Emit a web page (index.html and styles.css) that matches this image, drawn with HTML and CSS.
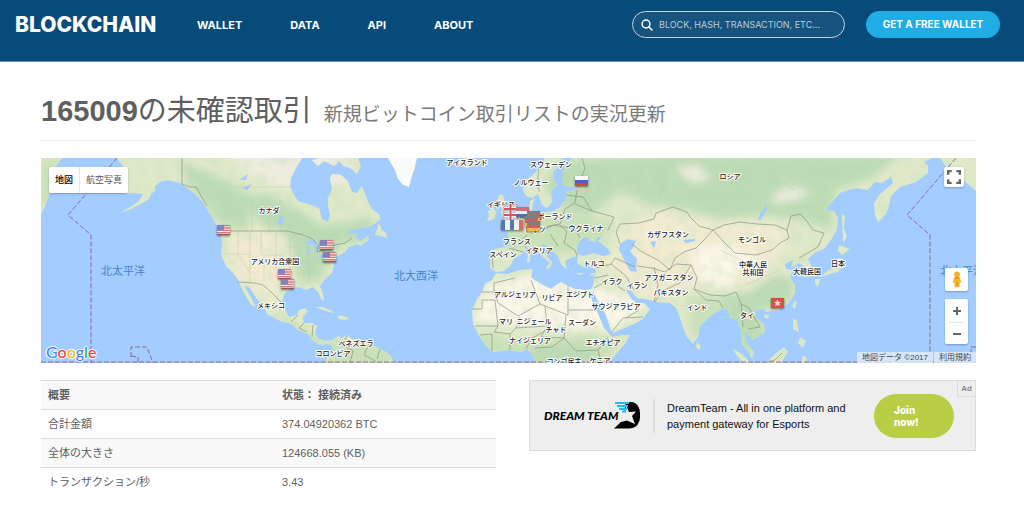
FILE: index.html
```html
<!DOCTYPE html>
<html lang="ja">
<head>
<meta charset="utf-8">
<meta name="viewport" content="width=device-width, initial-scale=1">
<title>未確認取引 - Blockchain</title>
<link rel="stylesheet" href="styles.css">
</head>
<body>
<header class="topbar">
  <a class="brand" href="#">BLOCKCHAIN</a>
  <nav class="nav">
    <a href="#">WALLET</a>
    <a href="#">DATA</a>
    <a href="#">API</a>
    <a href="#">ABOUT</a>
  </nav>
  <form class="search">
    <svg class="search-icon" viewBox="0 0 12 12" aria-hidden="true"><circle cx="5" cy="5" r="3.9"/><path d="M8 8l3 3"/></svg>
    <input type="search" aria-label="Search" placeholder="BLOCK, HASH, TRANSACTION, ETC...">
  </form>
  <a class="wallet-btn" href="#">GET A FREE WALLET</a>
</header>

<main class="page">
  <h1 class="title"><b>165009</b>の未確認取引 <small>新規ビットコイン取引リストの実況更新</small></h1>

  <section class="map" aria-label="地図">
    <svg class="map-canvas" viewBox="41 158 935 205" preserveAspectRatio="xMidYMid slice" role="img" aria-label="世界地図">
      <defs>
        <filter id="soft" x="-20%" y="-20%" width="140%" height="140%"><feGaussianBlur stdDeviation="4"/></filter>
        <filter id="relief" x="0" y="0" width="100%" height="100%">
          <feTurbulence type="fractalNoise" baseFrequency="0.09" numOctaves="4" seed="4"/>
          <feColorMatrix values="0 0 0 0 .55  0 0 0 0 .75  0 0 0 0 .52  2.6 0 0 0 -1.15"/>
        </filter>
        <clipPath id="land">
          <path d="M41 158H62L56 166L48 172L52 181L50 192L46 204L41 215Z"/>
          <path d="M109 158L117 158L124 168L128 185L125 194L134 193L143 194L139 201L130 207L120 213L131 209L143 203L149 199L151 194L155 191L155 186L160 182L168 180L180 183L190 190L198 197L203 202L207 209L212 217L217 226L221 235L222 244L221 255L226 266L232 272L237 278L241 287L247 298L251 305L256 307L252 299L246 289L245 285L250 288L255 296L260 303L265 309L267 314L280 321L292 324L298 330L308 334L312 340L320 345L327 344L332 345L333 350L328 357L323 363H394L390 355L383 350L373 345L360 340L352 339L347 335L342 338L338 336L333 340L325 341L319 339L315 334L317 326L312 323L304 323L303 317L308 311L305 308L299 310L297 315L289 317L285 310L282 302L284 294L290 289L299 287L306 290L313 287L318 292L321 299L324 301L323 294L320 286L325 279L332 273L334 265L334 258L340 255L345 252L349 247L358 244L360 246L369 240L368 236L360 241L355 237L358 233L350 233L344 239L350 230L360 228L371 226L380 220L380 215L372 209L369 204L366 196L362 186L357 193L352 192L348 181L341 175L332 174L330 178L332 189L328 198L328 206L330 215L328 222L322 219L319 208L308 204L298 201L293 193L290 186L291 178L296 168L302 158Z"/>
          <path d="M312 160L320 158H358L361 166L357 174L350 168L344 166L339 161L334 166L324 161L318 166Z"/>
          <path d="M375 235L379 223L382 230L386 233L387 238L381 236Z"/>
          <path d="M388 158H417L415 168L412 176L409 187L403 185L398 179L395 170Z"/>
          <path d="M458 160L465 158L479 160L478 165L467 168L460 166Z"/>
          <path d="M498 196L503 194L504 200L507 205L509 211L514 216L512 221L499 223L504 218L501 213L502 208L498 204Z M488 211L494 208L496 213L494 219L487 221L489 216Z"/>
          <path d="M545 158H563L560 165L553 172L554 181L558 185L551 191L552 202L547 208L542 205L538 194L532 198L526 196L523 190L524 181L532 176L540 167Z"/>
          <path d="M572 158L567 166L562 173L562 181L565 187L574 187L578 189L566 192L567 198L561 206L554 211L546 212L537 214L532 210L533 203L535 198L530 201L529 213L521 214L515 221L509 224L502 226L508 232L509 246L500 248L491 250L490 268L496 272L504 271L510 266L514 259L523 253L526 248L533 247L538 251L543 257L550 263L545 269L550 268L552 262L547 256L541 249L543 243L550 249L558 256L561 264L567 270L565 261L572 257L578 256L577 263L583 267L590 266L596 270L594 281L592 289L586 290L575 289L568 286L561 282L555 286L551 289L543 285L536 281L531 277L533 269L520 270L507 274L496 273L492 280L485 284L482 292L477 299L472 310L473 324L480 337L486 346L493 352L508 350L521 352L527 349L532 354L535 363H609L616 354L625 344L630 335L623 335L612 337L604 328L598 314L591 298L593 291L599 303L606 315L612 333L622 329L636 323L643 319L650 309L644 303L636 303L630 297L626 289L631 291L637 298L646 299L657 302L670 303L676 308L679 315L683 327L687 337L693 344L698 337L700 326L707 319L713 314L722 309L727 308L730 318L737 320L741 331L742 344L750 354L752 359L754 352L747 344L745 332L753 340L759 336L765 332L764 324L756 318L756 310L764 309L766 312L778 310L789 303L795 293L795 285L790 277L793 270L786 269L785 264L793 260L791 268L799 263L806 268L804 277L812 276L813 269L808 259L816 252L824 249L831 240L837 230L838 218L834 211L825 210L832 202L840 193L855 188L868 190L875 182L882 183L891 177L893 183L886 189L880 194L874 203L875 215L878 222L886 214L890 203L891 196L900 187L916 182L928 173L928 166L924 162L932 158Z"/>
          <path d="M940 158H976V191L970 186L961 178L952 174L945 165Z"/>
          <path d="M842 214L845 216L844 228L847 237L843 243Z M839 245L850 249L842 255L838 251Z M839 257L843 266L838 272L830 274L821 277L827 271L834 267Z M815 279L820 279L818 287L815 284Z M797 301L795 309L792 306L794 302Z M765 314L770 316L767 319L764 317Z M793 319L797 320L799 332L793 329Z M800 337L806 341L803 348L798 343Z M733 349L742 354L751 363H744L737 356Z M766 363L775 354L784 347L788 352L781 363Z M697 342L701 347L699 350L696 347Z M315 307L323 307L336 313L329 312Z M339 315L350 318L345 320L338 319Z M528 254L530 254L530 262L527 262Z M576 273L584 273L580 275Z M590 274L596 273L592 276Z M801 363L803 355L807 358L806 363Z"/>
        </clipPath>
        <symbol id="us" viewBox="0 0 13 10"><path fill="#f7e9e9" d="M0 0h13v10H0z"/><path stroke="#d9737b" stroke-width="1.4" d="M0 .6h13M0 3h13M0 5.4h13M0 7.8h13"/><path fill="#a3454b" d="M0 9h13v1H0z"/><path fill="#767dc0" d="M0 0h7v5.5H0z"/></symbol>
        <symbol id="gb" viewBox="0 0 13 10"><path fill="#8d97c6" d="M0 0h13v10H0z"/><path stroke="#f6eef2" stroke-width="2.4" d="M0 0l13 10M13 0L0 10"/><path stroke="#e08d96" d="M0 0l13 10M13 0L0 10"/><path stroke="#fff" stroke-width="4" d="M6.500 0v10M0 5h13"/><path stroke="#d54652" stroke-width="2" d="M6.500 0v10M0 5h13"/></symbol>
        <symbol id="nl" viewBox="0 0 13 10"><path fill="#cd6870" d="M0 0h13v4H0z"/><path fill="#eee" d="M0 4h13v3H0z"/><path fill="#4a62a8" d="M0 7h13v3H0z"/></symbol>
        <symbol id="de" viewBox="0 0 13 10"><path fill="#7a7676" d="M0 0h13v4H0z"/><path fill="#d9504f" d="M0 4h13v3H0z"/><path fill="#edb93d" d="M0 7h13v3H0z"/></symbol>
        <symbol id="fr" viewBox="0 0 13 10"><path fill="#4a74ad" d="M0 0h4v10H0z"/><path fill="#f4f4f4" d="M4 0h5v10H4z"/><path fill="#dc625f" d="M9 0h4v10H9z"/></symbol>
        <symbol id="ru" viewBox="0 0 13 10"><path fill="#fff" d="M0 0h13v4H0z"/><path fill="#3a55c8" d="M0 4h13v3H0z"/><path fill="#cf3b36" d="M0 7h13v3H0z"/></symbol>
        <symbol id="hk" viewBox="0 0 13 10"><path fill="#d9443b" d="M0 0h13v10H0z"/><path fill="#fbd9d4" d="M6.500 1.500l1 2.300 2.500.1-1.800 1.700.7 2.700-2.400-1.400-2.400 1.400.7-2.700L3 3.900l2.500-.1z"/></symbol>
      </defs>

      <rect class="sea" x="-400" y="158" width="1900" height="205"/>
      <g clip-path="url(#land)">
        <rect class="ground" x="41" y="158" width="935" height="205"/>
        <g filter="url(#soft)">
          <path class="pale" d="M230 150H345L350 182L290 190L270 182L245 172Z"/>
          <path class="forest" d="M178 160L200 170L225 180L250 195L270 195L295 208L320 225L350 222L372 218L375 238L340 245L325 270L318 282L300 280L290 240L262 225L250 210L246 240L235 226L220 224L205 205L190 185Z"/>
          <path class="sand" d="M225 240L245 230L282 232L285 262L275 285L282 300L270 305L235 275Z"/>
          <path class="wood" d="M220 230L226 230L226 255L221 258Z M265 306L285 318L320 340L385 345L400 370H320L290 330Z M41 158H62L52 205H41Z"/>
          <path class="forest" d="M545 185L560 160L680 155L900 155L870 178L835 190L830 230L805 220L760 215L720 220L690 210L650 205L620 190L590 215L560 208Z"/>
          <path class="wood" d="M505 215L570 212L615 225L600 245L560 255L500 250Z"/>
          <path class="sand" d="M620 230L660 210L700 220L740 222L790 225L782 250L770 270L750 288L700 285L650 300L600 262L620 250Z"/>
          <path class="desert" d="M485 286L530 275L600 288L650 305L612 330L570 330L475 322Z"/>
          <path class="desert" d="M690 252L720 242L760 258L738 270L730 290L700 280Z"/>
          <path class="wood" d="M475 334L500 337L535 342L585 334L620 340L600 370H470Z M685 296L720 298L722 315L695 340Z"/>
          <path class="forest" d="M720 295L750 292L775 275L795 280L790 305L760 310L765 340L745 355L725 315Z M530 348L590 343L600 370H530Z"/>
          <path class="pale" d="M675 166H700L712 180L690 182Z M770 197L790 186L812 192L800 199L775 204Z"/>
        </g>
        <rect class="noise" filter="url(#relief)" x="41" y="158" width="935" height="205"/>
        <path fill="#fafafa" d="M388 158H417L412 176L409 187L403 185L398 179Z"/>
      </g>

      <path class="water" d="M577 249L579 242L584 238L588 237L589 241L595 242L597 238L602 236L598 241L608 249L611 254L603 256L594 253L584 256L577 254Z M620 244L628 239L636 241L633 248L630 251L637 259L636 267L637 272L630 271L626 264L622 255L619 250Z M683 240L695 239L695 241L686 243Z M758 218L766 204L767 209L760 221Z M305 243L311 239L318 242L315 244L309 245Z M307 247L309 244L310 255L307 255Z M313 244L320 247L316 252Z M317 257L325 253L323 257Z M277 222L282 214L284 222L280 226Z M239 180L248 174L246 180Z M242 188L252 184L247 190Z M650 242L656 241L654 248Z M578 183L584 180L583 186Z"/>

      <g class="borders">
        <path d="M182 158V184L190 187L196 187L207 206 M229 231H287L300 234L311 238L318 245L317 252L324 250L335 245L345 243L352 238 M237 282L255 283L263 285L271 292L281 302"/>
        <path d="M298 315L291 322M304 323L299 328L307 332M313 325L312 337M347 336L342 345L353 351L350 363M369 344L364 355L376 361M380 349L377 359"/>
        <path d="M540 163L538 176L539 192M582 158L585 168L578 187M577 190L575 203L565 209L560 224L545 227M566 195L583 197L592 211L614 217L608 230M575 204L592 211M537 214L540 224L530 231L522 240L526 248M509 248L523 252M492 252L493 268M540 232L553 225L575 229L580 238M550 234L558 246M560 225L567 232L564 243L575 250L577 256M530 220L520 217"/>
        <path d="M620 244L616 232L620 224L638 223L654 219L656 213L673 207L687 212L690 217L699 226L713 230L705 239L696 248L684 252L675 258L670 270L658 260L642 252L632 244 M713 230L724 225L740 222L757 224L775 225L787 230L789 238L780 243L772 250L756 255L735 253L722 240L713 230 M787 230L791 216L800 214L806 220L813 230L824 233L818 247L799 258"/>
        <path d="M637 266L652 268L665 272L676 264L691 265L697 278L694 289L710 295L725 296L736 292L741 304L749 308M655 302L662 291L680 283L691 265M654 267L658 285L654 302M694 289L706 300L719 301L723 308M741 304L743 327M749 308L757 322L760 327L748 329"/>
        <path d="M482 292H494V283L515 278M494 290L498 303L518 316L540 304L531 280M472 309H482V300L495 300L498 326H475M540 304L568 315V286M569 310H595M520 317L516 328L547 326L545 306M547 326L541 337L564 338L566 315M498 326L494 332L510 334L516 328M480 335L492 334L492 351M510 334V350M526 349L532 338L547 330M564 338L576 351L598 350L608 337M564 338L552 347L535 348M598 350L601 363M596 268L611 264L626 276L634 290M594 288L609 280L625 291M595 278L608 275M611 333L623 318L643 317M626 318L639 310M611 264L615 258L635 267"/>
        <path d="M767 362L775 360L782 353"/>
      </g>
      <g class="states"><path d="M229 187H295M222 254H250M250 231V282M238 231V254L251 274M261 231V255H284M264 256V281M276 232V270M290 238V278M298 246V276M309 257V284M286 262H330M286 247H303M252 203V230M269 198V231M280 200V231M630 175L640 190M655 170L665 180L660 200M700 190L725 205M770 175L795 190M720 250L745 262M745 285L780 270M755 295L775 280M680 305L703 310"/></g>

      <g class="dateline">
        <path d="M117 158L68 215L91 235V363M956 158L907 215L930 235V363M976 347H971V363M131 357V347H147L153 363M131 356L138 357V363"/>
        <path d="M41 362H976"/>
      </g>

      <g class="ocean-label"><text x="101" y="275">北太平洋</text><text x="394" y="280">北大西洋</text><text x="940" y="275">北太平洋</text></g>
      <g class="place">
        <text x="467" y="165">アイスランド</text><text x="551" y="167">スウェーデン</text><text x="531" y="185">ノルウェー</text><text x="730" y="179">ロシア</text>
        <text x="269" y="213">カナダ</text><text x="275" y="264">アメリカ合衆国</text><text x="271" y="308">メキシコ</text><text x="356" y="346">ベネズエラ</text><text x="333" y="356">コロンビア</text>
        <text x="501" y="207">イギリス</text><text x="555" y="219">ポーランド</text><text x="535" y="232">ドイツ</text><text x="586" y="231">ウクライナ</text><text x="517" y="244">フランス</text><text x="539" y="253">イタリア</text><text x="503" y="257">スペイン</text>
        <text x="594" y="266">トルコ</text><text x="612" y="284">イラク</text><text x="637" y="288">イラン</text><text x="669" y="280">アフガニスタン</text><text x="671" y="295">パキスタン</text><text x="616" y="309">サウジアラビア</text>
        <text x="515" y="297">アルジェリア</text><text x="552" y="300">リビア</text><text x="580" y="297">エジプト</text><text x="506" y="324">マリ</text><text x="534" y="324">ニジェール</text><text x="556" y="332">チャド</text><text x="582" y="325">スーダン</text><text x="530" y="343">ナイジェリア</text><text x="603" y="345">エチオピア</text><text x="564" y="364">コンゴ民主</text><text x="600" y="363">ケニア</text>
        <text x="668" y="237">カザフスタン</text><text x="752" y="242">モンゴル</text><text x="753" y="267">中華人民</text><text x="753" y="275">共和国</text><text x="697" y="310">インド</text><text x="747" y="318">タイ</text><text x="807" y="274">大韓民国</text><text x="838" y="266">日本</text>
      </g>

      <g class="flags">
        <use href="#us" x="217" y="225" width="13" height="10"/><use href="#us" x="320" y="240" width="13" height="10"/><use href="#us" x="323" y="252" width="13" height="10"/><use href="#us" x="278" y="269" width="13" height="10"/><use href="#us" x="281" y="279" width="13" height="10"/>
        <use href="#gb" x="504" y="204" width="13" height="10"/><use href="#gb" x="504" y="210" width="13" height="10"/><use href="#nl" x="516" y="207" width="13" height="10"/><use href="#de" x="527" y="211" width="13" height="10"/><use href="#de" x="525" y="216" width="13" height="10"/><use href="#fr" x="501" y="220" width="13" height="10"/><use href="#fr" x="510" y="220" width="13" height="10"/><use href="#de" x="527" y="221" width="13" height="10"/><use href="#ru" x="575" y="176" width="13" height="10"/><use href="#hk" x="771" y="298" width="13" height="10"/>
      </g>
    </svg>

    <div class="map-types">
      <button type="button" class="active">地図</button>
      <button type="button">航空写真</button>
    </div>
    <button type="button" class="map-btn fullscreen" aria-label="全画面表示"><svg viewBox="0 0 12 12"><path d="M1 4V1h3M8 1h3v3M11 8v3H8M4 11H1V8"/></svg></button>
    <div class="map-side">
      <button type="button" class="map-btn pegman" aria-label="ストリートビュー"><svg viewBox="0 0 10 17"><ellipse cx="5" cy="15.500" rx="3.500" ry="1" fill="#ddd"/><circle cx="5" cy="3.300" r="2.900"/><path d="M2 6.500h6l1.300 5-1.500.2-.5 4H2.700l-.5-4-1.500-.2z"/><path fill="#d58b16" d="M2.500 6h5L6 7.500H4zM4.600 11h.8v4.500h-.8z"/></svg></button>
      <div class="zoom">
        <button type="button" aria-label="ズームイン"><svg viewBox="0 0 10 10"><path d="M1 5h8M5 1v8"/></svg></button>
        <button type="button" aria-label="ズームアウト"><svg viewBox="0 0 10 10"><path d="M1 5h8"/></svg></button>
      </div>
    </div>
    <a class="google" href="#" aria-label="Google"><span class="g-blue">G</span><span class="g-red">o</span><span class="g-yellow">o</span><span class="g-blue">g</span><span class="g-green">l</span><span class="g-red">e</span></a>
    <div class="credits"><span>地図データ ©2017</span><a href="#">利用規約</a></div>
  </section>

  <div class="columns">
    <table class="summary">
      <thead><tr><th scope="col">概要</th><th scope="col">状態： 接続済み</th></tr></thead>
      <tbody>
        <tr><td>合計金額</td><td>374.04920362 BTC</td></tr>
        <tr><td>全体の大きさ</td><td>124668.055 (KB)</td></tr>
        <tr><td>トランザクション/秒</td><td>3.43</td></tr>
      </tbody>
    </table>
    <aside class="ad">
      <div class="ad-logo"><span>DREAM TEAM</span>
        <svg viewBox="0 0 26 27" aria-hidden="true"><path d="M12 0H18C23 1 26 5 26 12V16C25 23 21 26.500 15 26.500H0L8 19L10 10Z"/><path class="star" d="M12.500 4L15 10L22 9.500L18 14L21 22L13 18.500L7 20L8.500 15L3 12L10 10Z"/><path class="beam" d="M1 1h14M3 4h11M5 7h8M8 9.500h4"/></svg>
      </div>
      <p>DreamTeam - All in one platform and payment gateway for Esports</p>
      <a class="join" href="#">Join now!</a>
      <span class="ad-tag">Ad</span>
    </aside>
  </div>
</main>
</body>
</html>
```

FILE: styles.css
```css
* { box-sizing: border-box; }
body {
  margin: 0;
  background: #fff;
  color: #5f5f5f;
  font: 11px/17px "Liberation Sans", "Noto Sans CJK JP", sans-serif;
}
a { color: inherit; text-decoration: none; }
button { margin: 0; padding: 0; border: 0; background: #fff; font: inherit; cursor: pointer; }

.topbar {
  display: flex;
  align-items: flex-start;
  height: 62px;
  padding: 11px 24px 0 15px;
  border-bottom: 1px solid #6b93b2;
  background: #074b7b;
  color: #fff;
  font: 700 11px/28px Inter, sans-serif;
}
.brand { width: 182px; font-size: 21px; font-weight: 800; }
.nav { display: flex; flex: 1; gap: 48px; }
.search {
  display: flex;
  align-items: center;
  gap: 6px;
  width: 213px;
  height: 27px;
  margin-right: 21px;
  padding: 0 8px;
  border: 1px solid #c2d3df;
  border-radius: 14px;
  background: #16547f;
}
.search-icon { flex: none; width: 12px; height: 12px; fill: none; stroke: #fff; stroke-width: 1.5; stroke-linecap: round; }
.search input { flex: 1; min-width: 0; padding: 0; border: 0; outline: 0; background: none; color: #fff; font: 9px/16px Inter, sans-serif; }
.search input::placeholder { color: #b9ccda; opacity: 1; }
.wallet-btn { width: 134px; border-radius: 14px; background: #20ace4; font-size: 10px; line-height: 27px; text-align: center; white-space: nowrap; }

.page { padding: 28px 48px 16px 41px; }
.title {
  margin: 0 0 17px;
  padding-bottom: 8px;
  border-bottom: 1px solid #eee;
  font-size: 29px;
  line-height: 42px;
  font-weight: 400;
}
.title b { font-weight: 700; }
.title small { margin-left: 4px; color: #7b7b7b; font-size: 19px; line-height: 1; }

.map { position: relative; height: 205px; overflow: hidden; background: #a3ccff; }
.map-canvas { display: block; width: 100%; height: 100%; }
.sea, .water { fill: #a3ccff; }
.ground { fill: #dfe9c8; }
.forest { fill: #bcdbb4; }
.wood { fill: #cae1b8; }
.sand { fill: #f2ebd0; }
.desert { fill: #faf6e8; }
.pale { fill: #eeecdf; }
.noise { opacity: .35; }
.borders { fill: none; stroke: #8e9487; stroke-width: .7; }
.states { fill: none; stroke: #c3c6b6; stroke-width: .5; }
.dateline { fill: none; stroke: #94698f; stroke-width: 1; stroke-dasharray: 5 2; }
.ocean-label { fill: #4a83c8; font-size: 11px; }
.place {
  fill: #222;
  stroke: #fff;
  stroke-width: 2px;
  stroke-linejoin: round;
  paint-order: stroke;
  font-size: 7px;
  font-weight: 500;
  font-family: "Noto Sans CJK JP", sans-serif;
  text-anchor: middle;
}
.flags { filter: drop-shadow(0 1px 1px #0008); opacity: .92; }

.map-types {
  position: absolute;
  top: 9px;
  left: 8px;
  display: flex;
  border-radius: 2px;
  overflow: hidden;
  box-shadow: 0 1px 2px #0004;
}
.map-types button { height: 26px; padding: 0 6px; color: #565656; font-size: 9px; }
.map-types .active { border-right: 1px solid #e6e6e6; color: #000; font-weight: 500; }
.map-btn { display: grid; place-items: center; border-radius: 2px; box-shadow: 0 1px 2px #0004; }
.fullscreen { position: absolute; top: 9px; right: 12px; width: 20px; height: 20px; }
.fullscreen svg { width: 14px; height: 14px; fill: none; stroke: #666; stroke-width: 2; }
.map-side { position: absolute; right: 8px; bottom: 19px; display: grid; gap: 8px; width: 23px; }
.pegman { height: 23px; }
.pegman svg { width: 10px; height: 17px; fill: #f5b32b; }
.zoom { display: grid; padding: 0 4px; border-radius: 2px; background: #fff; box-shadow: 0 1px 2px #0004; }
.zoom button { display: grid; place-items: center; height: 23px; }
.zoom button + button { border-top: 1px solid #e6e6e6; height: 22px; }
.zoom svg { width: 10px; height: 10px; stroke: #666; stroke-width: 2; }
.google {
  position: absolute;
  left: 5px;
  bottom: 2px;
  font: 500 16px/18px Lato, sans-serif;
  text-shadow: 0 0 1px #fff, 1px 0 1px #fff, -1px 0 1px #fff, 0 1px 1px #fff, 0 -1px 1px #fff;
}
.g-blue { color: #4285f4; }
.g-red { color: #ea4335; }
.g-yellow { color: #fbbc05; }
.g-green { color: #34a853; }
.credits { position: absolute; right: 0; bottom: 0; display: flex; gap: 1px; color: #444; font-size: 8px; line-height: 11px; }
.credits > * { padding: 0 5px; background: #e4edf8cc; }

.columns { display: grid; grid-template-columns: 455fr 447fr; gap: 33px; align-items: start; padding-top: 17px; }
.summary { width: 100%; border-collapse: collapse; table-layout: fixed; }
.summary th, .summary td { height: 29px; padding: 6px 7px 5px; border-top: 1px solid #ddd; line-height: 17px; text-align: left; }
.summary th:first-child { width: 234px; }
.summary thead tr, .summary tbody tr:nth-child(even) { background: #f9f9f9; }

.ad {
  position: relative;
  display: flex;
  align-items: center;
  height: 71px;
  padding: 0 21px 0 14px;
  border: 1px solid #ddd;
  background: #eee;
  color: #111;
}
.ad-logo { display: flex; align-items: center; width: 96px; color: #000; font: italic 900 12px/27px Lato, sans-serif; white-space: nowrap; }
.ad-logo span { flex: 1; }
.ad-logo svg { flex: none; width: 26px; height: 27px; margin-left: -8px; }
.star { fill: #eee; }
.beam { fill: none; stroke: #25bce9; stroke-width: 2; }
.ad p { flex: 1; margin: 0 24px 0 13px; padding: 1px 0 1px 12px; border-left: 2px solid #ddd; line-height: 16px; }
.join {
  width: 80px;
  height: 44px;
  padding: 10px 20px;
  border-radius: 22px;
  background: #bace45;
  color: #fff;
  font: 800 10px/12px Inter, sans-serif;
}
.ad-tag { position: absolute; top: 0; right: 0; padding: 0 3px; border: 1px solid #ddd; border-width: 0 0 1px 1px; color: #888; font-size: 8px; font-weight: 700; line-height: 15px; }
```
